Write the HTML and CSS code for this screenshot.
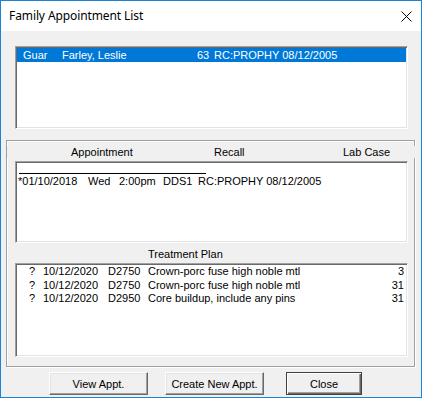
FILE: index.html
```html
<!DOCTYPE html>
<html>
<head>
<meta charset="utf-8">
<link rel="stylesheet" href="styles.css">
</head>
<body>
<div class="window">
  <div class="titlebar">
    <span class="title">Family Appointment List</span>
    <svg class="close-x" width="12" height="12" viewBox="0 0 12 12"><path d="M0.5 0.5 L10.5 10.5 M10.5 0.5 L0.5 10.5" stroke="#000" stroke-width="1" fill="none"/></svg>
  </div>
  <div class="client">
    <div class="listbox family">
      <div class="fam-row selected">
        <span class="c-guar">Guar</span>
        <span class="c-name">Farley, Leslie</span>
        <span class="c-age">63</span>
        <span class="c-recall">RC:PROPHY 08/12/2005</span>
      </div>
    </div>
    <div class="frame">
      <div class="headers">
        <span></span>
        <span>Appointment</span>
        <span>Recall</span>
        <span>Lab Case</span>
      </div>
      <div class="listbox appts">
        <div class="appt-sep"></div>
        <div class="appt-row">
          <span class="a-date">*01/10/2018</span>
          <span class="a-day">Wed</span>
          <span class="a-time">2:00pm</span>
          <span class="a-prov">DDS1</span>
          <span class="a-rc">RC:PROPHY 08/12/2005</span>
        </div>
      </div>
      <div class="tp-label">Treatment Plan</div>
      <div class="listbox treat">
        <div class="tp-row">
          <span class="t-q">?</span><span>10/12/2020</span><span>D2750</span><span>Crown-porc fuse high noble mtl</span><span class="t-num">3</span>
        </div>
        <div class="tp-row">
          <span class="t-q">?</span><span>10/12/2020</span><span>D2750</span><span>Crown-porc fuse high noble mtl</span><span class="t-num">31</span>
        </div>
        <div class="tp-row">
          <span class="t-q">?</span><span>10/12/2020</span><span>D2950</span><span>Core buildup, include any pins</span><span class="t-num">31</span>
        </div>
      </div>
    </div>
    <div class="buttons">
      <button class="btn btn-view">View Appt.</button>
      <button class="btn btn-create">Create New Appt.</button>
      <button class="btn btn-close">Close</button>
    </div>
  </div>
</div>
</body>
</html>
```
FILE: styles.css
```css
html, body {
  margin: 0;
  padding: 0;
  background: #f0f0f0;
}
.window {
  width: 422px;
  height: 398px;
  box-sizing: border-box;
  border: 1px solid #1883d7;
  display: flex;
  flex-direction: column;
  font-family: "Liberation Sans", Arial, sans-serif;
  font-size: 11px;
  color: #000;
}
.titlebar {
  height: 30px;
  flex: none;
  background: #fff;
  display: flex;
  align-items: center;
  padding-left: 8px;
  position: relative;
}
.title {
  font-family: "Noto Sans", sans-serif;
  font-size: 12px;
  letter-spacing: -0.1px;
  color: #000;
  margin-top: -1px;
}
.close-x {
  position: absolute;
  left: 400px;
  top: 10px;
}
.client {
  flex: 1;
  background: #f0f0f0;
  padding-top: 15px;
}
.listbox {
  box-sizing: border-box;
  width: 393px;
  background: #fff;
  border: 1px solid;
  border-color: #a0a0a0 #fff #fff #a0a0a0;
  box-shadow: inset 1px 1px 0 #696969, inset -1px -1px 0 #e3e3e3;
  padding: 1px;
  overflow: hidden;
}
.family {
  margin-left: 14px;
  height: 83px;
}
.fam-row {
  display: grid;
  grid-template-columns: 45px 135px 17px auto;
  height: 14px;
  line-height: 14px;
  white-space: nowrap;
}
.fam-row.selected {
  background: #0078d7;
  color: #fff;
}
.c-guar {
  padding-left: 6px;
}
.frame {
  margin-top: 11px;
  margin-left: 5px;
  width: 409px;
  height: 227px;
  box-sizing: border-box;
  border: 1px solid #a0a0a0;
  box-shadow: inset 1px 1px 0 #fff, 1px 1px 0 #fff;
  padding: 0 6px 9px 8px;
}
.headers {
  display: grid;
  grid-template-columns: 64px 143px 129px auto;
  margin: 5px -9px 3px -8px;
  height: 12px;
  line-height: 12px;
  background: #f0f0f0;
  white-space: nowrap;
}
.appts {
  height: 82px;
}
.appt-sep {
  margin-top: 10px;
  margin-left: 2px;
  width: 187px;
  border-top: 1px solid #000;
}
.appt-row {
  display: flex;
  margin-top: 1px;
  padding-left: 1px;
  line-height: 13px;
  white-space: nowrap;
}
.a-date { width: 70px; }
.a-day { width: 31px; }
.a-time { width: 44px; }
.a-prov { width: 35px; }
.tp-label {
  height: 20px;
  box-sizing: border-box;
  padding-top: 5px;
  padding-left: 133px;
  line-height: 13px;
}
.treat {
  height: 94px;
}
.tp-row {
  display: grid;
  grid-template-columns: 26px 65px 40px 1fr auto;
  line-height: 13.5px;
  white-space: nowrap;
}
.t-q {
  padding-left: 12px;
}
.t-num {
  text-align: right;
  padding-right: 2px;
}
.buttons {
  display: flex;
  margin-top: 5px;
  padding-left: 48px;
}
.btn {
  box-sizing: border-box;
  height: 23px;
  padding: 0;
  font-family: "Liberation Sans", Arial, sans-serif;
  font-size: 11px;
  color: #000;
  background: #f0f0f0;
  border: 1px solid;
  border-color: #fff #696969 #696969 #fff;
  box-shadow: inset -1px -1px 0 #a0a0a0, inset 1px 1px 0 #e3e3e3;
}
.btn-view { width: 99px; }
.btn-create { width: 99px; margin-left: 17px; }
.btn-close {
  width: 76px;
  margin-left: 22px;
  border: 1px solid #404040;
  box-shadow: inset 1px 1px 0 #fff, inset -1px -1px 0 #696969, inset -2px -2px 0 #a0a0a0;
}
```
